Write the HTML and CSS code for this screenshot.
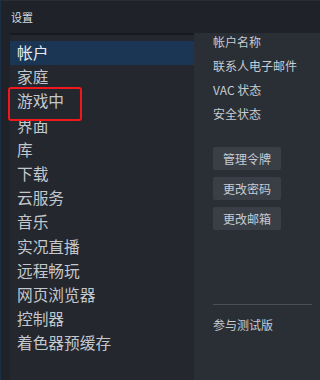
FILE: index.html
```html
<!DOCTYPE html>
<html lang="zh-CN">
<head>
<meta charset="utf-8">
<title>设置</title>
<link rel="stylesheet" href="styles.css">
</head>
<body>
<div class="window">
  <div class="titlebar">设置</div>
  <div class="main">
    <nav class="sidebar">
      <div class="item selected">帐户</div>
      <div class="item">家庭</div>
      <div class="item">游戏中</div>
      <div class="item">界面</div>
      <div class="item">库</div>
      <div class="item">下载</div>
      <div class="item">云服务</div>
      <div class="item">音乐</div>
      <div class="item">实况直播</div>
      <div class="item">远程畅玩</div>
      <div class="item">网页浏览器</div>
      <div class="item">控制器</div>
      <div class="item">着色器预缓存</div>
    </nav>
    <section class="panel">
      <div class="field">帐户名称</div>
      <div class="field">联系人电子邮件</div>
      <div class="field">VAC 状态</div>
      <div class="field">安全状态</div>
      <div class="buttons">
        <div class="btn">管理令牌</div>
        <div class="btn">更改密码</div>
        <div class="btn">更改邮箱</div>
      </div>
      <div class="rule"></div>
      <div class="field beta">参与测试版</div>
    </section>
  </div>
  <div class="highlight"></div>
</div>
</body>
</html>
```

FILE: styles.css
```css
html, body {
  margin: 0;
  padding: 0;
  height: 380px;
  overflow: hidden;
  background: #1f2329;
}

.window {
  position: relative;
  min-width: 218px;
  height: 380px;
  box-sizing: border-box;
  border-left: 1px solid #1b2f46;
  border-top: 1px solid #2a2e34;
  background: #1f2329;
  display: flex;
  flex-direction: column;
  font-family: "Noto Sans CJK SC", "Noto Sans", sans-serif;
  overflow: hidden;
}

.titlebar {
  height: 32px;
  flex: none;
  display: flex;
  align-items: center;
  padding-left: 10px;
  font-size: 11px;
  color: #d6dade;
}

.main {
  flex: 1;
  display: flex;
  padding-left: 9px;
  min-height: 0;
}

.sidebar {
  width: 184px;
  flex: none;
  background: #24272d;
  border-top: 2px solid #16191d;
  padding-top: 6px;
  box-sizing: border-box;
}

.item {
  height: 24.2px;
  line-height: 24px;
  padding-left: 7px;
  font-size: 15.7px;
  color: #c3c8ce;
  white-space: nowrap;
}

.item.selected {
  background: #1b3655;
  color: #e6ebf0;
}

.panel {
  flex: 1;
  background: #2a2e35;
  padding-left: 19px;
  padding-right: 8px;
  white-space: nowrap;
}

.field {
  height: 24px;
  line-height: 18px;
  font-size: 12px;
  color: #c6ccd3;
}

.buttons {
  margin-top: 18px;
  display: flex;
  flex-direction: column;
  align-items: flex-start;
  gap: 7px;
}

.btn {
  height: 23px;
  background: #3a3f47;
  border-radius: 2px;
  font-size: 12px;
  line-height: 23px;
  color: #c6ccd3;
  padding: 0 10px;
}

.rule {
  margin-top: 74px;
  height: 1px;
  background: #4a4f57;
}

.field.beta {
  margin-top: 11px;
}

.highlight {
  position: absolute;
  left: 7px;
  top: 86px;
  width: 74px;
  height: 34px;
  box-sizing: border-box;
  border: 2px solid #f0181c;
  border-radius: 3px;
}
```
